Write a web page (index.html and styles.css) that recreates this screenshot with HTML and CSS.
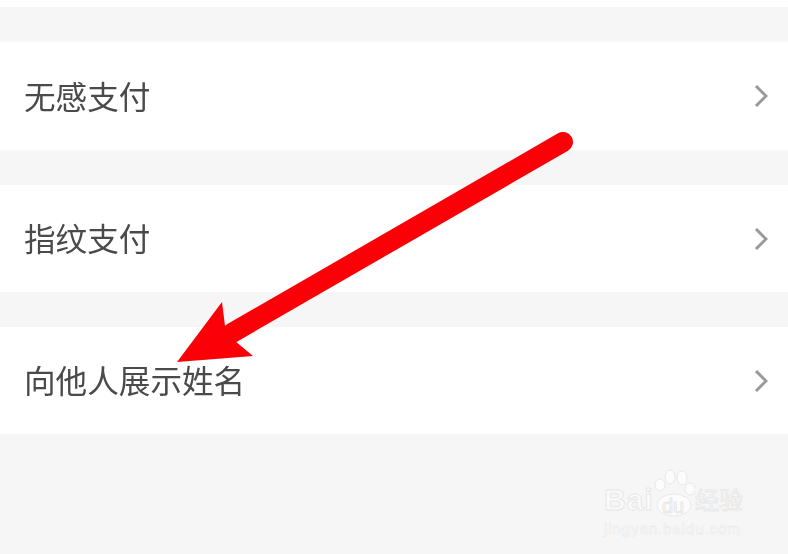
FILE: index.html
```html
<!DOCTYPE html>
<html lang="zh-CN">
<head>
<meta charset="UTF-8">
<meta name="viewport" content="width=device-width, initial-scale=1.0">
<title>支付设置</title>
<link rel="stylesheet" href="styles.css">
</head>
<body>
<div class="page">
  <div class="top-strip"></div>
  <div class="row row-first">
    <span class="row-label">无感支付</span>
    <svg class="chevron" width="16" height="26" viewBox="0 0 16 26"><path d="M4 3 L14 13 L4 23"/></svg>
  </div>
  <div class="row">
    <span class="row-label">指纹支付</span>
    <svg class="chevron" width="16" height="26" viewBox="0 0 16 26"><path d="M4 3 L14 13 L4 23"/></svg>
  </div>
  <div class="row">
    <span class="row-label">向他人展示姓名</span>
    <svg class="chevron" width="16" height="26" viewBox="0 0 16 26"><path d="M4 3 L14 13 L4 23"/></svg>
  </div>

  <svg class="arrow" width="788" height="554" viewBox="0 0 788 554">
    <path class="arrow-line" d="M563 142 L232 333"/>
    <path class="arrow-head" d="M177 362 L222 302 L225 326 L235 341 L253 356 Z"/>
  </svg>

  <div class="watermark">
    <div class="wm-top">
      <span class="wm-bai">Bai</span>
      <span class="wm-paw">
        <svg width="42" height="50" viewBox="0 0 42 50">
          <ellipse cx="7" cy="17" rx="5" ry="6"/>
          <ellipse cx="17" cy="9" rx="5" ry="7"/>
          <ellipse cx="29" cy="10" rx="5" ry="7"/>
          <ellipse cx="37" cy="21" rx="5" ry="6"/>
          <ellipse cx="21" cy="37" rx="17" ry="11"/>
        </svg>
        <span class="wm-du">du</span>
      </span>
      <span class="wm-cn">经验</span>
    </div>
    <div class="wm-url">jingyan.baidu.com</div>
  </div>
</div>
</body>
</html>
```

FILE: styles.css
```css
* {
  box-sizing: border-box;
}
html, body {
  margin: 0;
  padding: 0;
}
body {
  background: #f6f6f6;
  font-family: "Noto Sans CJK SC", "Liberation Sans", sans-serif;
}
.page {
  position: relative;
  width: 788px;
  height: 554px;
  overflow: hidden;
}
.top-strip {
  height: 7px;
  background: #fff;
}
.row {
  display: flex;
  align-items: center;
  justify-content: space-between;
  height: 107px;
  margin-top: 35px;
  padding: 0 20px 0 24px;
  background: #fff;
}
.row-first {
  height: 108px;
}
.row-label {
  margin-bottom: 3px;
  font-size: 31.6px;
  line-height: 40px;
  color: #4a4a4a;
  filter: blur(0.5px);
}
.chevron {
  filter: blur(0.6px);
}
.chevron path {
  fill: none;
  stroke: #999;
  stroke-width: 3px;
}
.arrow {
  position: absolute;
  top: 0;
  left: 0;
}
.arrow-line {
  fill: none;
  stroke: #fb0007;
  stroke-width: 20px;
  stroke-linecap: round;
}
.arrow-head {
  fill: #fb0007;
}
.watermark {
  position: absolute;
  top: 468px;
  left: 604px;
  width: 142px;
  color: #fbfbfb;
  -webkit-text-stroke: 1px #e8e8e8;
}
.wm-top {
  display: flex;
  align-items: flex-end;
  height: 50px;
}
.wm-bai {
  width: 49px;
  font-family: "Liberation Sans", sans-serif;
  font-size: 30px;
  font-weight: 700;
  line-height: 36px;
  letter-spacing: 1px;
  white-space: nowrap;
}
.wm-paw {
  position: relative;
  flex: none;
  width: 42px;
  height: 50px;
}
.wm-paw svg {
  display: block;
}
.wm-paw ellipse {
  fill: #fcfcfc;
  stroke: #e8e8e8;
  stroke-width: 1px;
}
.wm-du {
  position: absolute;
  left: 9px;
  bottom: 1px;
  font-family: "Liberation Sans", sans-serif;
  font-size: 20px;
  line-height: 22px;
}
.wm-cn {
  margin-bottom: 4px;
  font-size: 24px;
  line-height: 30px;
  white-space: nowrap;
}
.wm-url {
  margin-top: 1px;
  font-family: "Liberation Sans", sans-serif;
  font-size: 15.5px;
  line-height: 20px;
  letter-spacing: 0.7px;
  -webkit-text-stroke: 0.5px #e8e8e8;
  white-space: nowrap;
}
```
